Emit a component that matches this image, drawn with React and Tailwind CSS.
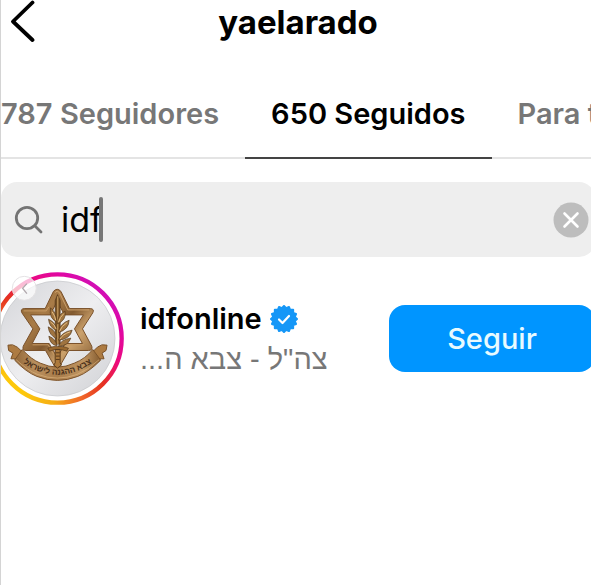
import { useState } from 'react';

const tabs = [
  { id: 'followers', label: '787 Seguidores' },
  { id: 'following', label: '650 Seguidos' },
  { id: 'forYou', label: 'Para ti' },
];

const badgePoints = Array.from({ length: 32 }, (_, i) => {
  const r = i % 2 === 0 ? 13 : 11;
  const a = (i * Math.PI) / 16;
  return `${(14 + r * Math.sin(a)).toFixed(2)},${(14 - r * Math.cos(a)).toFixed(2)}`;
}).join(' ');

function VerifiedBadge() {
  return (
    <svg className="w-7 h-7 shrink-0" viewBox="0 0 28 28" role="img" aria-label="Verificado">
      <polygon points={badgePoints} fill="#1597f7" stroke="#1597f7" strokeWidth="2" strokeLinejoin="round" />
      <path d="M9 14.5l3.5 3.5 6.5-7" fill="none" stroke="#fff" strokeWidth="2.2" strokeLinecap="round" strokeLinejoin="round" />
    </svg>
  );
}

function Avatar() {
  return (
    <svg className="w-[133px] h-[133px] shrink-0" viewBox="-29 29 400 400" role="img" aria-label="idfonline">
      <defs>
        <radialGradient id="ring" gradientUnits="userSpaceOnUse" cx="25" cy="390" r="430">
          <stop offset="0.1" stopColor="#fdc80b" />
          <stop offset="0.32" stopColor="#f5ae16" />
          <stop offset="0.52" stopColor="#f0642a" />
          <stop offset="0.66" stopColor="#e5321f" />
          <stop offset="0.78" stopColor="#ed0a78" />
          <stop offset="0.9" stopColor="#e008a4" />
          <stop offset="1" stopColor="#c814c0" />
        </radialGradient>
        <linearGradient id="disc" x1="0" y1="0" x2="1" y2="1">
          <stop offset="0" stopColor="#d3d4d8" />
          <stop offset="0.5" stopColor="#eeeef0" />
          <stop offset="1" stopColor="#d0d1d5" />
        </linearGradient>
        <linearGradient id="gold" x1="0" y1="0" x2="1" y2="1">
          <stop offset="0" stopColor="#85602f" />
          <stop offset="0.3" stopColor="#a97c48" />
          <stop offset="0.5" stopColor="#825a30" />
          <stop offset="0.68" stopColor="#cba16c" />
          <stop offset="1" stopColor="#7b532b" />
        </linearGradient>
        <linearGradient id="ribbon" x1="0" y1="0" x2="1" y2="0">
          <stop offset="0" stopColor="#93693a" />
          <stop offset="0.25" stopColor="#ba8f5e" />
          <stop offset="0.5" stopColor="#a97d4b" />
          <stop offset="0.8" stopColor="#c09562" />
          <stop offset="1" stopColor="#845b2f" />
        </linearGradient>
        <path id="motto" d="M58 296Q170 380 284 296" />
      </defs>
      <circle cx="171" cy="229" r="193" fill="#fff" stroke="url(#ring)" strokeWidth="13" />
      <circle cx="171" cy="229" r="173" fill="url(#disc)" stroke="#c4c5c9" strokeWidth="2" />

      {/* Star */}
      <path
        d="M159 87Q170 75 181 87L207 139H270Q283 140 277 152L246 200L274 252Q278 265 264 265H205L170 326L135 265H76Q64 265 68 252L97 200L64 152Q58 140 71 139H134ZM170 117L149 158H90L118 200L95 244H146L170 286L194 244H246L222 200L249 158H192Z"
        fill="url(#gold)"
        fillRule="evenodd"
        stroke="#79502a"
        strokeWidth="3"
      />
      <path d="M163 91Q170 82 177 91L202 143H266" fill="none" stroke="#cda16b" strokeWidth="3" />
      <path d="M96 248H143L170 294L197 248H250M69 146H137L145 134" fill="none" stroke="#c89b63" strokeWidth="3" />

      {/* Ribbon */}
      <path d="M22 249Q36 244 50 255L65 269L52 290H31L37 273L24 265ZM320 249Q304 244 291 255L277 269L289 290H311L305 273L317 265Z" fill="#ad7b42" stroke="#795026" strokeWidth="3" />
      <path
        d="M65 262Q92 292 119 303Q171 327 222 303Q255 290 277 262L301 294Q264 331 232 343Q171 367 109 343Q76 330 42 294Z"
        fill="url(#ribbon)"
        stroke="#7c532a"
        strokeWidth="3"
      />
      <path d="M47 293Q81 325 111 337Q171 359 230 337Q263 324 296 293" fill="none" stroke="#dbb27c" strokeWidth="2" />
      <text fill="#49301a" className="font-['Liberation_Sans',sans-serif] text-[25px] font-bold" textAnchor="middle">
        <textPath href="#motto" startOffset="50%">צבא ההגנה לישראל</textPath>
      </text>

      {/* Sword and olive branch */}
      <path d="M164 115L171 97L179 115V246H164Z" fill="#765023" stroke="#51371c" strokeWidth="2" />
      <path d="M172 102V246" stroke="#d6ab6c" strokeWidth="3" />
      <path d="M142 258Q171 246 204 258L199 267Q171 257 147 267Z" fill="#98682f" stroke="#583a1b" strokeWidth="2" />
      <path d="M164 262H179V302L183 309L171 318L160 309L164 302Z" fill="#ad7a3d" stroke="#5b3c1c" strokeWidth="3" />
      <path d="M166 272H178M166 282H178M166 292H178" stroke="#593a1c" strokeWidth="3" />
      <g fill="#a07440" stroke="#513718" strokeWidth="2">
        <path d="M167 178Q145 168 150 137Q168 149 167 178Z" />
        <path d="M171 185Q171 156 194 147Q198 174 171 185Z" />
        <path d="M168 204Q147 198 144 171Q166 180 168 204Z" />
        <path d="M174 211Q176 185 206 174Q205 202 174 211Z" />
        <path d="M168 229Q146 220 143 194Q167 205 168 229Z" />
        <path d="M174 234Q183 209 215 204Q209 231 174 234Z" />
        <path d="M169 251Q148 247 145 222Q166 230 169 251Z" />
        <path d="M174 253Q180 232 211 228Q203 251 174 253Z" />
      </g>
      <path d="M155 149Q164 161 166 175M190 154Q178 165 174 180M150 179Q163 187 167 201M200 181Q182 192 177 208M209 209Q187 216 178 231" fill="none" stroke="#e3bd83" strokeWidth="3" />

      <circle cx="71" cy="78" r="36" fill="#fff" fillOpacity="0.72" stroke="#e4e2e4" strokeWidth="3" />
      <path d="M79 64L66 78L79 94" fill="none" stroke="#b2a9ae" strokeWidth="4" />
    </svg>
  );
}

export default function FollowingPage() {
  const [activeTab, setActiveTab] = useState('following');
  const [query, setQuery] = useState('idf');

  return (
    <div className="min-h-screen overflow-hidden bg-white border-l border-[#d4d4d4] font-['Inter',sans-serif] text-black">
      {/* Header */}
      <header className="grid grid-cols-[40px_1fr_36px] h-[72px] items-start">
        <button type="button" aria-label="Volver" className="pl-2">
          <svg className="w-7 h-11" viewBox="0 0 28 44" fill="none" stroke="currentColor" strokeWidth="3.8" strokeLinecap="round" strokeLinejoin="round">
            <path d="M23.5 2.5L4 21.5L23.5 40" />
          </svg>
        </button>
        <h1 className="pt-1 text-center text-[33px] leading-9 font-bold">yaelarado</h1>
        <span />
      </header>

      {/* Tabs */}
      <nav className="flex h-[87px] border-b-2 border-[#e4e4e4]" role="tablist">
        {tabs.map((tab) => (
          <button
            key={tab.id}
            type="button"
            role="tab"
            aria-selected={activeTab === tab.id}
            onClick={() => setActiveTab(tab.id)}
            className={`shrink-0 h-[87px] pb-0.5 text-[29px] font-semibold whitespace-nowrap border-b-2 first:pl-0 px-[26px] ${
              activeTab === tab.id ? 'text-black border-[#444]' : 'text-[#777] border-transparent'
            }`}
          >
            {tab.label}
          </button>
        ))}
      </nav>

      {/* Search */}
      <div className="mt-[23px] -mr-1 flex h-[75px] items-center rounded-2xl bg-[#eee] pl-3 pr-[6px]">
        <label htmlFor="search" className="mr-4" aria-label="Buscar">
          <svg className="w-8 h-8" viewBox="0 0 32 32" fill="none" stroke="#747474" strokeWidth="2.8" strokeLinecap="round">
            <circle cx="14" cy="14" r="10.7" />
            <path d="M22 22L28 28" />
          </svg>
        </label>
        <input
          id="search"
          value={query}
          onChange={(e) => setQuery(e.target.value)}
          className="field-sizing-content min-w-0 text-[34px] leading-10 outline-none"
        />
        <span className="-ml-1 w-1 h-[45px] shrink-0 rounded-sm bg-[#777]" />
        <button type="button" aria-label="Borrar" onClick={() => setQuery('')} className="ml-auto">
          <svg className="w-9 h-9" viewBox="0 0 36 36">
            <circle cx="18" cy="18" r="17.5" fill="#bdbdbd" />
            <path d="M11.5 11.5l13 13M24.5 11.5l-13 13" stroke="#fff" strokeWidth="2.6" strokeLinecap="round" />
          </svg>
        </button>
      </div>

      {/* Result */}
      <div className="mt-[15px] -ml-[10px] -mr-1 flex items-center">
        <Avatar />
        <div className="ml-4 min-w-0 pt-0.5">
          <div className="flex items-center gap-2">
            <a href="#idfonline" className="text-[29px] leading-9 font-semibold">idfonline</a>
            <VerifiedBadge />
          </div>
          <p dir="rtl" className="w-fit pt-0.5 font-['Liberation_Sans',sans-serif] text-[29px] leading-10 whitespace-nowrap text-[#777]">
            צה"ל - צבא ה...
          </p>
        </div>
        <button type="button" className="ml-auto h-[67px] w-[206px] shrink-0 rounded-2xl bg-[#0095ff] text-[29px] font-medium text-[#e8faff]">
          Seguir
        </button>
      </div>
    </div>
  );
}
